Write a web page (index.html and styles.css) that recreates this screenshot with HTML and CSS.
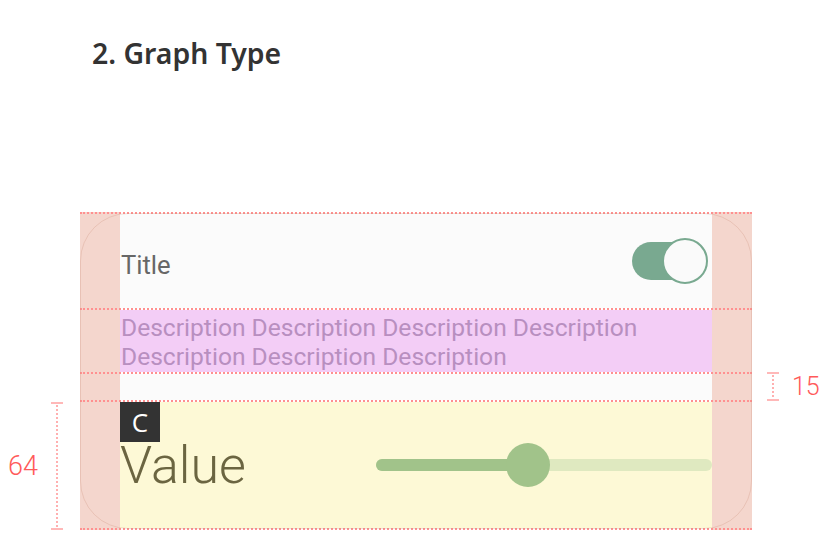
FILE: index.html
```html
<!DOCTYPE html>
<html lang="en">
<head>
<meta charset="utf-8">
<title>Graph Type</title>
<link rel="stylesheet" href="styles.css">
</head>
<body>
<h1 class="heading">2. Graph Type</h1>
<div class="stage">
  <div class="card">
    <div class="row row-title">
      <span class="title">Title</span>
      <span class="toggle"><span class="toggle-track"></span><span class="toggle-thumb"></span></span>
    </div>
    <div class="row row-desc">
      <p class="desc">Description Description Description Description Description Description Description</p>
    </div>
    <div class="row row-gap"></div>
    <div class="row row-value">
      <div class="value-inner">
        <span class="badge">C</span>
        <span class="value">Value</span>
        <div class="slider">
          <span class="slider-track"></span>
          <span class="slider-active" style="width:152px"></span>
          <span class="slider-thumb" style="left:130px"></span>
        </div>
      </div>
    </div>
  </div>
  <div class="measure measure-64"><span class="measure-line"></span><span class="measure-label">64</span></div>
  <div class="measure measure-15"><span class="measure-line"></span><span class="measure-label">15</span></div>
</div>
</body>
</html>
```
FILE: styles.css
```css
html, body {
  margin: 0;
  padding: 0;
  background: #ffffff;
}
body {
  width: 832px;
  height: 544px;
  overflow: hidden;
  font-family: Roboto, "Liberation Sans", sans-serif;
}
.heading {
  margin: 0;
  padding: 34px 0 0 92px;
  height: 212px;
  box-sizing: border-box;
  font-family: "Noto Sans", "Open Sans", sans-serif;
  font-weight: 600;
  font-size: 28.4px;
  line-height: 38px;
  color: #333333;
}
.stage {
  position: relative;
  width: 672px;
  margin-left: 80px;
}
.card {
  position: relative;
  display: flex;
  flex-direction: column;
  background: linear-gradient(to right, #f4d6cd 0, #f4d6cd 40px, transparent 40px, transparent 632px, #f4d6cd 632px);
}
.card::after {
  content: "";
  position: absolute;
  left: 0;
  right: 0;
  top: 1px;
  bottom: 1px;
  border: 1px solid rgba(200, 140, 120, 0.28);
  border-radius: 48px;
  pointer-events: none;
}
.row {
  padding: 0 40px;
  background-clip: content-box;
  border-top: 2px dotted #ff9090;
}
.row-title {
  height: 94px;
  background-color: #fbfbfb;
  display: flex;
  align-items: center;
  justify-content: space-between;
}
.title {
  font-size: 25.6px;
  color: #676767;
  padding-left: 1px;
  margin-top: 8px;
}
.toggle {
  position: relative;
  width: 76px;
  height: 48px;
  margin-right: 4px;
}
.toggle-track {
  position: absolute;
  left: 0;
  top: 5px;
  width: 66px;
  height: 38px;
  border-radius: 19px;
  background: #79a990;
}
.toggle-thumb {
  position: absolute;
  right: 0;
  top: 0;
  width: 46px;
  height: 46px;
  border-radius: 50%;
  border: 2px solid #79a990;
  background: #fafafa;
  box-sizing: border-box;
  margin-top: 1px;
}
.row-desc {
  height: 62px;
  background-color: #f3cdf6;
}
.desc {
  margin: 0;
  padding: 3px 0 0 1px;
  font-size: 24.6px;
  line-height: 29px;
  color: #b88fc0;
}
.row-gap {
  height: 26px;
  background-color: #fbfbfb;
}
.row-value {
  height: 126px;
  background-color: #fdf9d6;
  border-bottom: 2px dotted #ff9090;
}
.value-inner {
  position: relative;
  height: 100%;
  display: flex;
  align-items: center;
  justify-content: space-between;
}
.badge {
  position: absolute;
  left: 0;
  top: 0;
  width: 40px;
  height: 40px;
  background: #333333;
  color: #ffffff;
  font-family: "Open Sans", "Noto Sans", sans-serif;
  font-size: 26px;
  line-height: 40px;
  text-align: center;
}
.value {
  font-size: 52px;
  line-height: 42px;
  font-weight: 300;
  color: #6b6541;
  margin-top: 2px;
}
.slider {
  position: relative;
  width: 336px;
  height: 44px;
}
.slider-track {
  position: absolute;
  left: 0;
  right: 0;
  top: 16px;
  height: 12px;
  border-radius: 6px;
  background: #dfe9c0;
}
.slider-active {
  position: absolute;
  left: 0;
  top: 16px;
  height: 12px;
  border-radius: 6px;
  background: #a1c38a;
}
.slider-thumb {
  position: absolute;
  top: 0;
  width: 44px;
  height: 44px;
  border-radius: 50%;
  background: #a1c38a;
}
.measure {
  position: absolute;
  display: flex;
  align-items: center;
}
.measure-line {
  position: relative;
  display: block;
  width: 2px;
  border-left: 2px dotted #ffb0b0;
  box-sizing: border-box;
}
.measure-line::before,
.measure-line::after {
  content: "";
  position: absolute;
  left: -7px;
  width: 12px;
  height: 2px;
  background: #ffb8b8;
}
.measure-line::before { top: 0; }
.measure-line::after { bottom: 0; }
.measure-label {
  font-size: 27px;
  font-weight: 300;
  color: #ff5a5a;
  line-height: 30px;
}
.measure-64 {
  left: -72px;
  top: 190px;
  height: 128px;
  flex-direction: row-reverse;
  gap: 18px;
}
.measure-64 .measure-line { height: 128px; }
.measure-15 {
  left: 692px;
  top: 160px;
  height: 29px;
  gap: 18px;
}
.measure-15 .measure-line { height: 29px; }
.measure-15 .measure-label { font-size: 25px; }
```
